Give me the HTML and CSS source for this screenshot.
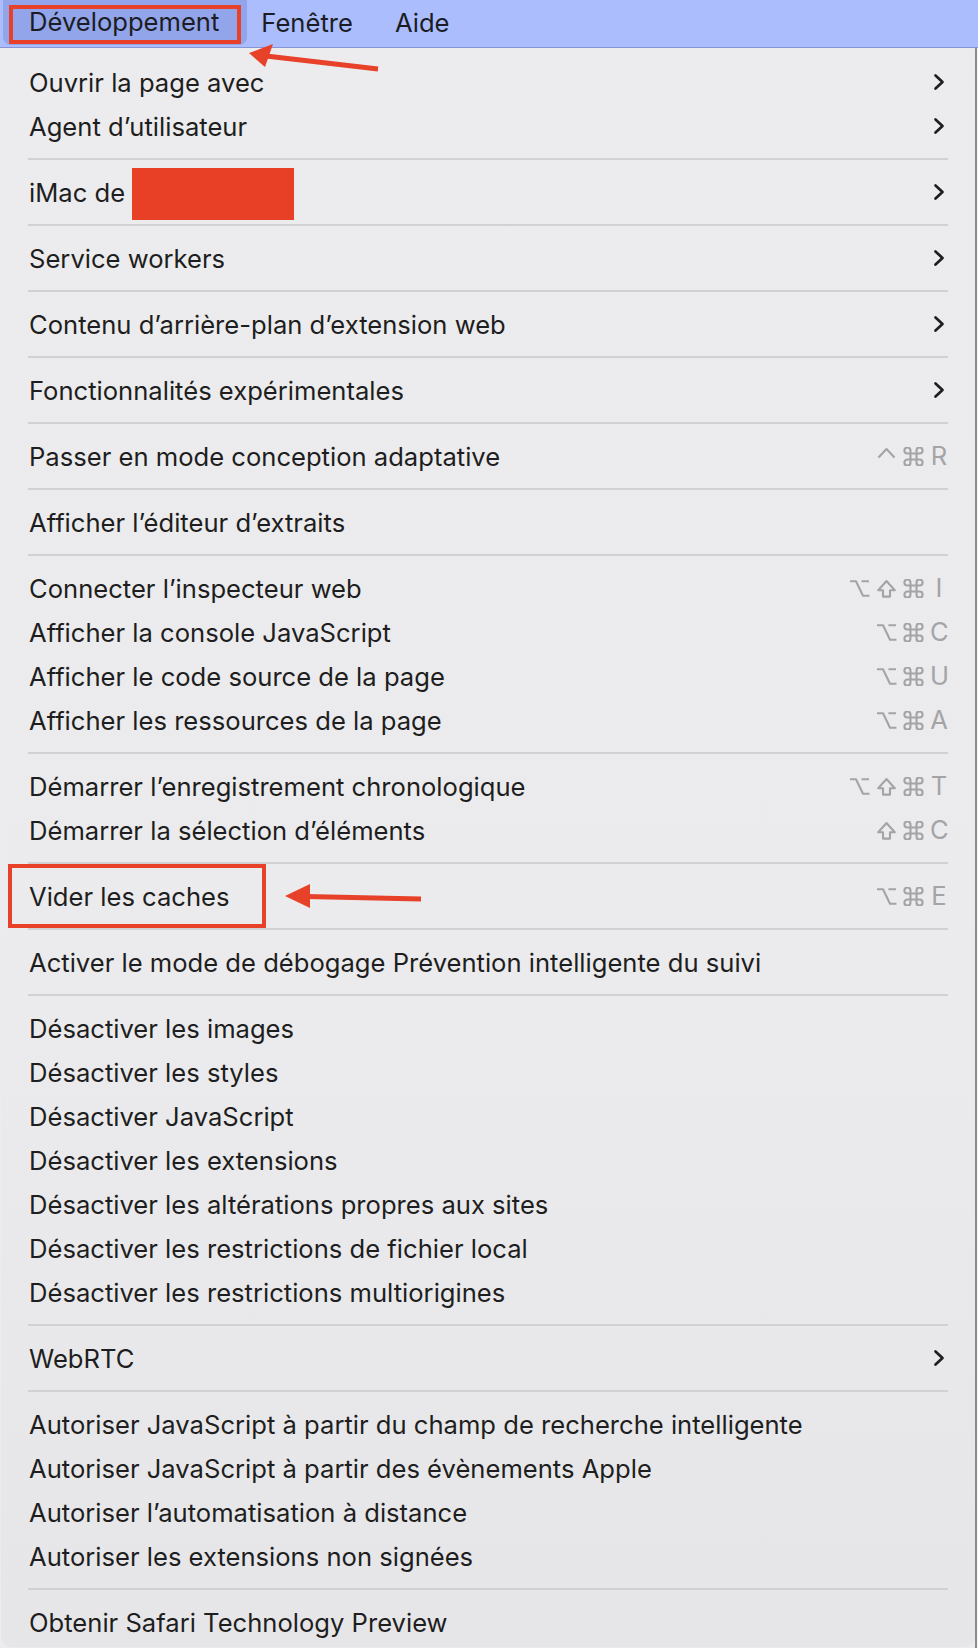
FILE: index.html
```html
<!DOCTYPE html>
<html lang="fr">
<head>
<meta charset="utf-8">
<title>Développement</title>
<link rel="stylesheet" href="styles.css">
</head>
<body>
<div class="screen">
  <header class="menubar">
    <div class="mb-item mb-active">Développement</div>
    <div class="mb-item">Fenêtre</div>
    <div class="mb-item">Aide</div>
  </header>

  <svg width="0" height="0" class="defs" aria-hidden="true">
    <defs>
      <symbol id="i-cmd" viewBox="2.6 2.6 18.8 18.8"><path d="M15 6v12a3 3 0 1 0 3-3H6a3 3 0 1 0 3 3V6a3 3 0 1 0-3 3h12a3 3 0 1 0-3-3"/></symbol>
      <symbol id="i-opt" viewBox="0 0 21 19"><path d="M1 2.2h6l7 14.6h6.5M12.5 2.2h7.5"/></symbol>
      <symbol id="i-shift" viewBox="0 0 21 19"><path d="M7 17.6v-6.4H2.2L10.5 2l8.3 9.2H14v6.4z"/></symbol>
      <symbol id="i-ctrl" viewBox="0 0 21 19"><path d="M2.5 10.5L10.5 2l8 8.5"/></symbol>
      <symbol id="i-chev" viewBox="0 0 12 18"><path d="M2.5 2.5 L9.5 9 L2.5 15.5"/></symbol>
    </defs>
  </svg>

  <div class="menu">
    <div class="item"><span class="label">Ouvrir la page avec</span><svg class="chev"><use href="#i-chev"/></svg></div>
    <div class="item"><span class="label">Agent d’utilisateur</span><svg class="chev"><use href="#i-chev"/></svg></div>
    <div class="sep"></div>
    <div class="item"><span class="label">iMac de <span class="redact"></span></span><svg class="chev"><use href="#i-chev"/></svg></div>
    <div class="sep"></div>
    <div class="item"><span class="label">Service workers</span><svg class="chev"><use href="#i-chev"/></svg></div>
    <div class="sep"></div>
    <div class="item"><span class="label">Contenu d’arrière-plan d’extension web</span><svg class="chev"><use href="#i-chev"/></svg></div>
    <div class="sep"></div>
    <div class="item"><span class="label">Fonctionnalités expérimentales</span><svg class="chev"><use href="#i-chev"/></svg></div>
    <div class="sep"></div>
    <div class="item"><span class="label">Passer en mode conception adaptative</span><span class="kbd"><svg class="mod"><use href="#i-ctrl"/></svg><svg class="mod"><use href="#i-cmd"/></svg><span class="key">R</span></span></div>
    <div class="sep"></div>
    <div class="item"><span class="label">Afficher l’éditeur d’extraits</span></div>
    <div class="sep"></div>
    <div class="item"><span class="label">Connecter l’inspecteur web</span><span class="kbd"><svg class="mod"><use href="#i-opt"/></svg><svg class="mod"><use href="#i-shift"/></svg><svg class="mod"><use href="#i-cmd"/></svg><span class="key">I</span></span></div>
    <div class="item"><span class="label">Afficher la console JavaScript</span><span class="kbd"><svg class="mod"><use href="#i-opt"/></svg><svg class="mod"><use href="#i-cmd"/></svg><span class="key">C</span></span></div>
    <div class="item"><span class="label">Afficher le code source de la page</span><span class="kbd"><svg class="mod"><use href="#i-opt"/></svg><svg class="mod"><use href="#i-cmd"/></svg><span class="key">U</span></span></div>
    <div class="item"><span class="label">Afficher les ressources de la page</span><span class="kbd"><svg class="mod"><use href="#i-opt"/></svg><svg class="mod"><use href="#i-cmd"/></svg><span class="key">A</span></span></div>
    <div class="sep"></div>
    <div class="item"><span class="label">Démarrer l’enregistrement chronologique</span><span class="kbd"><svg class="mod"><use href="#i-opt"/></svg><svg class="mod"><use href="#i-shift"/></svg><svg class="mod"><use href="#i-cmd"/></svg><span class="key">T</span></span></div>
    <div class="item"><span class="label">Démarrer la sélection d’éléments</span><span class="kbd"><svg class="mod"><use href="#i-shift"/></svg><svg class="mod"><use href="#i-cmd"/></svg><span class="key">C</span></span></div>
    <div class="sep"></div>
    <div class="item"><span class="label">Vider les caches</span><span class="kbd"><svg class="mod"><use href="#i-opt"/></svg><svg class="mod"><use href="#i-cmd"/></svg><span class="key">E</span></span></div>
    <div class="sep"></div>
    <div class="item"><span class="label">Activer le mode de débogage Prévention intelligente du suivi</span></div>
    <div class="sep"></div>
    <div class="item"><span class="label">Désactiver les images</span></div>
    <div class="item"><span class="label">Désactiver les styles</span></div>
    <div class="item"><span class="label">Désactiver JavaScript</span></div>
    <div class="item"><span class="label">Désactiver les extensions</span></div>
    <div class="item"><span class="label">Désactiver les altérations propres aux sites</span></div>
    <div class="item"><span class="label">Désactiver les restrictions de fichier local</span></div>
    <div class="item"><span class="label">Désactiver les restrictions multiorigines</span></div>
    <div class="sep"></div>
    <div class="item"><span class="label">WebRTC</span><svg class="chev"><use href="#i-chev"/></svg></div>
    <div class="sep"></div>
    <div class="item"><span class="label">Autoriser JavaScript à partir du champ de recherche intelligente</span></div>
    <div class="item"><span class="label">Autoriser JavaScript à partir des évènements Apple</span></div>
    <div class="item"><span class="label">Autoriser l’automatisation à distance</span></div>
    <div class="item"><span class="label">Autoriser les extensions non signées</span></div>
    <div class="sep"></div>
    <div class="item"><span class="label">Obtenir Safari Technology Preview</span></div>
  </div>

  <div class="box box-dev"></div>
  <div class="box box-cache"></div>
  <svg class="arrows" width="978" height="1648" viewBox="0 0 978 1648">
    <path class="shaft" d="M378 69 L266 56"/>
    <path class="head" d="M249 53 L273 44 L265 67 Z"/>
    <path class="shaft" d="M421 899 L306 896.5"/>
    <path class="head" d="M285 896 L310 884 L310 908 Z"/>
  </svg>
</div>
</body>
</html>
```

FILE: styles.css
```css
html, body {
  margin: 0;
  padding: 0;
}
body {
  background: #f4f4f4;
  font-family: Inter, "Noto Sans", "Liberation Sans", sans-serif;
  color: #1e1e20;
}
.defs {
  position: absolute;
  width: 0;
  height: 0;
}
.screen {
  position: relative;
  width: 978px;
  height: 1648px;
  overflow: hidden;
  background: linear-gradient(to right, #ececee 0, #ececee 975px, #8a8a8a 975px, #8a8a8a 977px, #f7f7f7 977px);
}
.menubar {
  height: 48px;
  background: #abbdfd;
  border-bottom: 1px solid #8595d6;
  display: flex;
  align-items: stretch;
  padding-left: 3px;
  font-size: 25.6px;
  box-sizing: border-box;
}
.mb-item {
  display: flex;
  align-items: center;
  padding: 0 21px 2px;
  color: #1c1d24;
}
.mb-item.mb-active {
  background: #92a4ea;
  border-radius: 0 0 8px 8px;
  padding: 0 28px 2px 26px;
  margin-right: -7px;
  height: 45px;
  box-sizing: border-box;
}
.menu {
  margin-left: 1px;
  width: 974px;
  height: 1599px;
  box-sizing: border-box;
  background: linear-gradient(180deg, #ececee 0%, #ebebed 60%, #e6e6e9 100%);
  border-radius: 10px;
  padding: 12px 27px 0 27px;
  font-size: 25.6px;
}
.item {
  height: 44px;
  display: flex;
  align-items: center;
  justify-content: space-between;
  padding-left: 1px;
}
.label {
  display: flex;
  align-items: center;
  white-space: nowrap;
}
.redact {
  display: inline-block;
  width: 162px;
  height: 52px;
  background: #e84026;
  margin-left: 7px;
  margin-top: 4px;
}
.sep {
  height: 22px;
  display: flex;
  align-items: center;
}
.sep::after {
  content: "";
  display: block;
  width: 100%;
  height: 2px;
  background: #d1d1d4;
}
.chev {
  width: 12px;
  height: 18px;
  margin-right: 3px;
  fill: none;
  stroke: #1e1e20;
  stroke-width: 2.7;
  stroke-linecap: round;
  stroke-linejoin: round;
}
.kbd {
  display: flex;
  align-items: center;
  gap: 6px;
  color: #a4a4a7;
}
.mod {
  width: 21px;
  height: 19px;
  fill: none;
  stroke: #a4a4a7;
  stroke-width: 2.1;
  stroke-linejoin: round;
  stroke-linecap: butt;
}
.key {
  width: 18px;
  text-align: center;
  line-height: 1;
}
.box {
  position: absolute;
  border: 4px solid #e8412a;
  box-sizing: border-box;
}
.box-dev {
  left: 9px;
  top: 5px;
  width: 232px;
  height: 39px;
}
.box-cache {
  left: 8px;
  top: 864px;
  width: 258px;
  height: 64px;
}
.arrows {
  position: absolute;
  left: 0;
  top: 0;
}
.shaft {
  stroke: #e8412a;
  stroke-width: 5;
  fill: none;
}
.head {
  fill: #e8412a;
}
```
